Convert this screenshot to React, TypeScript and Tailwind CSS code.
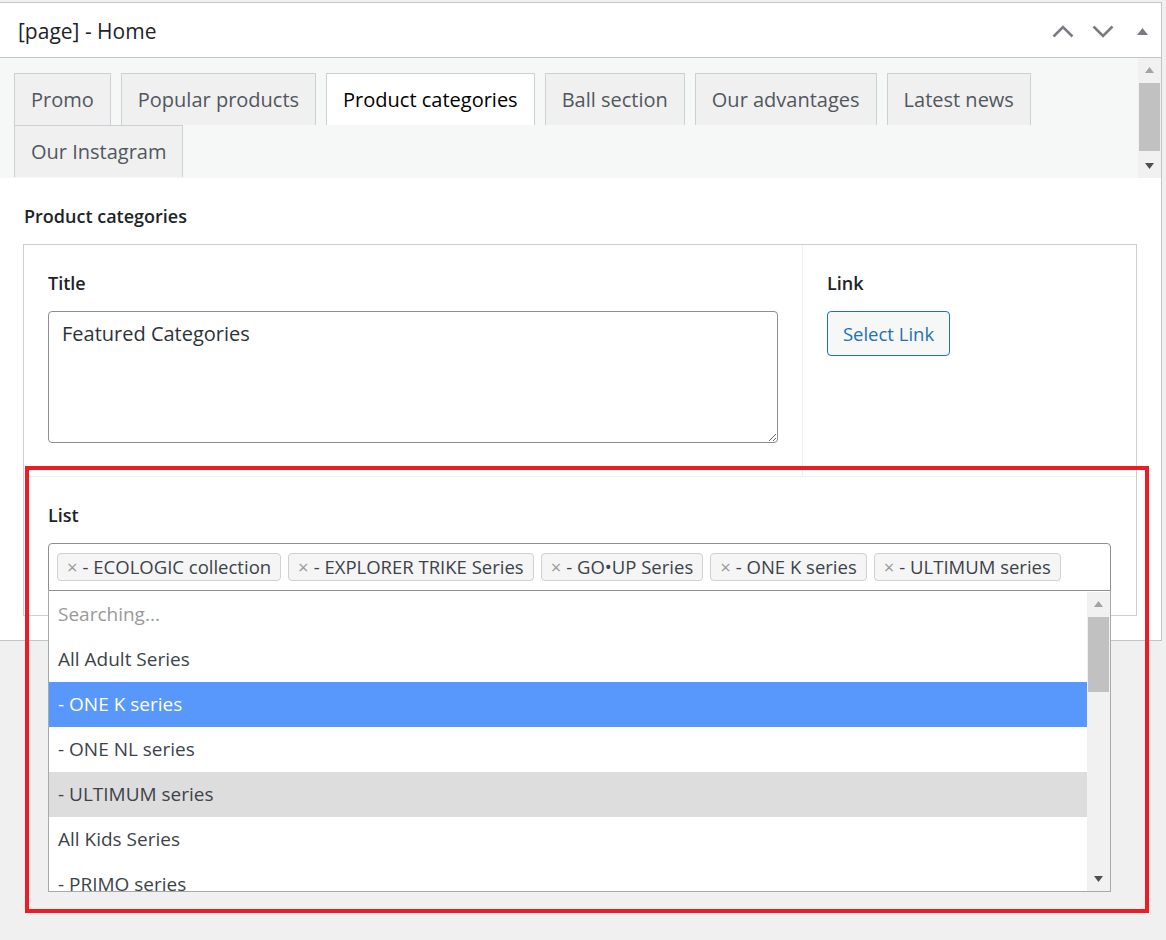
import React from "react";

const tabs = [
  "Promo",
  "Popular products",
  "Product categories",
  "Ball section",
  "Our advantages",
  "Latest news",
  "Our Instagram",
];

const chips = [
  "- ECOLOGIC collection",
  "- EXPLORER TRIKE Series",
  "- GO•UP Series",
  "- ONE K series",
  "- ULTIMUM series",
];

const options = [
  { label: "Searching...", kind: "muted" },
  { label: "All Adult Series", kind: "" },
  { label: "- ONE K series", kind: "active" },
  { label: "- ONE NL series", kind: "" },
  { label: "- ULTIMUM series", kind: "hover" },
  { label: "All Kids Series", kind: "" },
  { label: "- PRIMO series", kind: "" },
];

/* fake scrollbar, the kind Windows draws */
function Scrollbar({ thumbTop, thumbHeight }: { thumbTop: number; thumbHeight: number }) {
  return (
    <div className="relative h-full w-[23px] shrink-0 bg-[#f1f1f1]">
      <svg className="absolute left-[7px] top-[9px]" width="9" height="6" viewBox="0 0 9 6">
        <polygon points="0,6 4.5,0 9,6" fill="#a3a3a3" />
      </svg>
      <div
        className="absolute left-[1px] right-[1px] bg-[#c1c1c1]"
        style={{ top: thumbTop, height: thumbHeight }}
      />
      <svg className="absolute bottom-[9px] left-[7px]" width="9" height="6" viewBox="0 0 9 6">
        <polygon points="0,0 9,0 4.5,6" fill="#505050" />
      </svg>
    </div>
  );
}

export default function App() {
  return (
    <div className="relative min-h-[940px] bg-[#f0f0f1] pt-[2px] font-['Open_Sans','Noto_Sans',sans-serif]">
      {/* ================= POSTBOX ================= */}
      <div className="w-[1162px] border-y border-r border-[#c3c4c7] bg-white">
        {/* HEADER */}
        <div className="flex h-[55px] items-center justify-between border-b border-[#c3c4c7] pl-[18px] pr-[13px] pt-[2px]">
          <h2 className="text-[21px] leading-none text-[#1d2327]">[page] - Home</h2>
          <div className="flex items-center">
            <svg width="22" height="13" viewBox="0 0 22 13" className="mr-[18px]">
              <polyline points="1.5,11.5 11,2 20.5,11.5" fill="none" stroke="#787c82" strokeWidth="2.6" />
            </svg>
            <svg width="22" height="13" viewBox="0 0 22 13" className="mr-[23px]">
              <polyline points="1.5,1.5 11,11 20.5,1.5" fill="none" stroke="#787c82" strokeWidth="2.6" />
            </svg>
            <svg width="11" height="7" viewBox="0 0 11 7">
              <polygon points="0,7 5.5,0 11,7" fill="#787c82" />
            </svg>
          </div>
        </div>

        {/* TABS */}
        <div className="flex h-[120px] bg-[#f6f7f7]">
          <div className="flex flex-1 flex-wrap content-start gap-x-[10px] pl-[14px] pt-[15px]">
            {tabs.map((t) => (
              <div
                key={t}
                className={`flex h-[52px] items-center border-x border-t border-[#ccd0d4] px-[16px] text-[20px] ${
                  t === "Product categories"
                    ? "bg-white text-[#000]"
                    : "bg-[#f0f0f1] text-[#50575e]"
                }`}
              >
                {t}
              </div>
            ))}
          </div>
          <Scrollbar thumbTop={25} thumbHeight={68} />
        </div>

        {/* CONTENT */}
        <div className="pb-[24px] pl-[23px] pr-[24px] pt-[26px]">
          <p className="mb-[16px] pl-px text-[18px] font-semibold leading-[24px] text-[#1d2327]">
            Product categories
          </p>

          <div className="border border-[#ccd0d4]">
            {/* Title / Link row */}
            <div className="flex border-b border-[#eeeeee]">
              <div className="w-[778px] px-[24px] pb-[33px] pt-[26px]">
                <p className="mb-[16px] text-[18px] font-semibold leading-[24px] text-[#1d2327]">
                  Title
                </p>
                <textarea
                  readOnly
                  defaultValue="Featured Categories"
                  className="block h-[132px] w-full rounded-[4px] border border-[#8c8f94] pl-[13px] pt-[9px] text-[20px] leading-[26px] text-[#2c3338] outline-none"
                />
              </div>
              <div className="flex-1 border-l border-[#eeeeee] pl-[24px] pt-[26px]">
                <p className="mb-[16px] text-[18px] font-semibold leading-[24px] text-[#1d2327]">
                  Link
                </p>
                <button className="h-[45px] w-[123px] rounded-[4px] border border-[#2271b1] bg-[#f6f7f7] text-[18.5px] text-[#2271b1]">
                  Select Link
                </button>
              </div>
            </div>

            {/* List row */}
            <div className="pb-[24px] pl-[24px] pr-[25px] pt-[26px]">
              <p className="mb-[16px] text-[18px] font-semibold leading-[24px] text-[#1d2327]">
                List
              </p>
              <div className="relative">
                <div className="flex h-[48px] items-start gap-[7px] rounded-t-[4px] border border-[#8c8f94] bg-white pl-[8px] pt-[9px]">
                  {chips.map((c) => (
                    <span
                      key={c}
                      className="flex h-[28px] items-center whitespace-nowrap rounded-[4px] border border-[#d0d0d0] bg-[#f5f5f5] pl-[9px] pr-[9px] text-[18.5px] text-[#3c434a]"
                    >
                      <span className="mr-[5px] text-[#999]">×</span>
                      {c}
                    </span>
                  ))}
                </div>

                {/* DROPDOWN */}
                <div className="absolute left-0 right-0 top-full z-10 flex h-[301px] border-x border-b border-[#a7aaad] bg-white pt-px">
                  <div className="flex-1 overflow-hidden">
                    {options.map((o) => (
                      <div
                        key={o.label}
                        className={`flex h-[45px] items-center pl-[9px] text-[19px] ${
                          o.kind === "active"
                            ? "bg-[#5897fb] text-white"
                            : o.kind === "hover"
                            ? "bg-[#dddddd] text-[#3c434a]"
                            : o.kind === "muted"
                            ? "text-[#999]"
                            : "text-[#3c434a]"
                        }`}
                      >
                        {o.label}
                      </div>
                    ))}
                  </div>
                  <Scrollbar thumbTop={25} thumbHeight={75} />
                </div>
              </div>
            </div>
          </div>
        </div>
      </div>

      {/* red highlight drawn on the screenshot */}
      <div className="pointer-events-none absolute left-[25px] top-[466px] z-20 h-[447px] w-[1124px] border-4 border-[#ed1c24]" />
    </div>
  );
}
